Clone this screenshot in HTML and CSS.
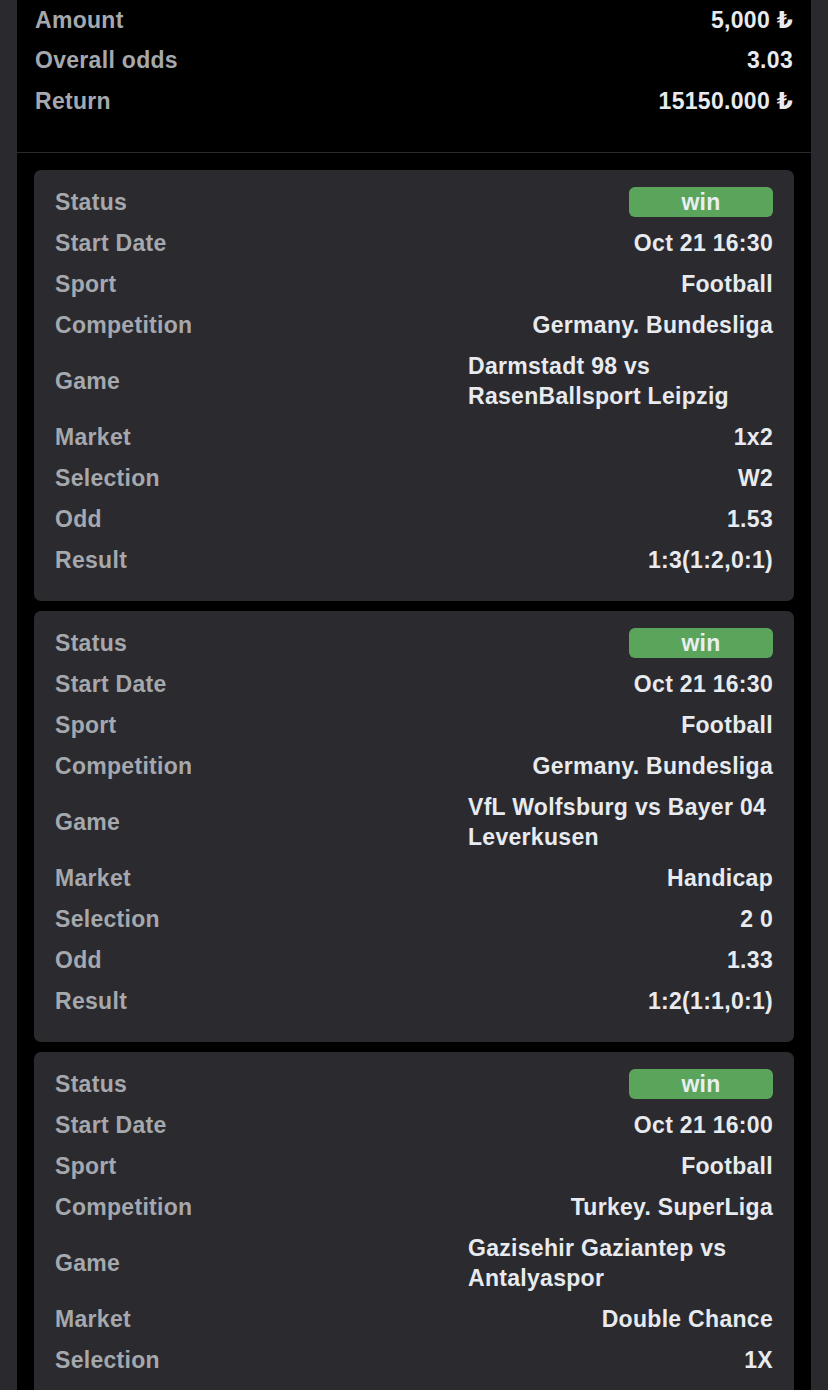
FILE: index.html
```html
<!DOCTYPE html>
<html lang="en">
<head>
<meta charset="utf-8">
<title>Bet details</title>
<link rel="stylesheet" href="styles.css">
</head>
<body>
<div class="panel">
  <section class="summary">
    <div class="row"><span class="label">Amount</span><span class="value">5,000 ₺</span></div>
    <div class="row"><span class="label">Overall odds</span><span class="value">3.03</span></div>
    <div class="row"><span class="label">Return</span><span class="value">15150.000 ₺</span></div>
  </section>
  <div class="divider"></div>
  <section class="bets">
    <div class="card">
      <div class="row"><span class="label">Status</span><span class="badge">win</span></div>
      <div class="row"><span class="label">Start Date</span><span class="value">Oct 21 16:30</span></div>
      <div class="row"><span class="label">Sport</span><span class="value">Football</span></div>
      <div class="row"><span class="label">Competition</span><span class="value">Germany. Bundesliga</span></div>
      <div class="row row-multi"><span class="label">Game</span><span class="value">Darmstadt 98 vs RasenBallsport Leipzig</span></div>
      <div class="row"><span class="label">Market</span><span class="value">1x2</span></div>
      <div class="row"><span class="label">Selection</span><span class="value">W2</span></div>
      <div class="row"><span class="label">Odd</span><span class="value">1.53</span></div>
      <div class="row"><span class="label">Result</span><span class="value">1:3(1:2,0:1)</span></div>
    </div>
    <div class="card">
      <div class="row"><span class="label">Status</span><span class="badge">win</span></div>
      <div class="row"><span class="label">Start Date</span><span class="value">Oct 21 16:30</span></div>
      <div class="row"><span class="label">Sport</span><span class="value">Football</span></div>
      <div class="row"><span class="label">Competition</span><span class="value">Germany. Bundesliga</span></div>
      <div class="row row-multi"><span class="label">Game</span><span class="value">VfL Wolfsburg vs Bayer 04 Leverkusen</span></div>
      <div class="row"><span class="label">Market</span><span class="value">Handicap</span></div>
      <div class="row"><span class="label">Selection</span><span class="value">2 0</span></div>
      <div class="row"><span class="label">Odd</span><span class="value">1.33</span></div>
      <div class="row"><span class="label">Result</span><span class="value">1:2(1:1,0:1)</span></div>
    </div>
    <div class="card">
      <div class="row"><span class="label">Status</span><span class="badge">win</span></div>
      <div class="row"><span class="label">Start Date</span><span class="value">Oct 21 16:00</span></div>
      <div class="row"><span class="label">Sport</span><span class="value">Football</span></div>
      <div class="row"><span class="label">Competition</span><span class="value">Turkey. SuperLiga</span></div>
      <div class="row row-multi"><span class="label">Game</span><span class="value">Gazisehir Gaziantep vs Antalyaspor</span></div>
      <div class="row"><span class="label">Market</span><span class="value">Double Chance</span></div>
      <div class="row"><span class="label">Selection</span><span class="value">1X</span></div>
    </div>
  </section>
</div>
</body>
</html>
```
FILE: styles.css
```css
html, body {
  margin: 0;
  padding: 0;
}

body {
  background: #2a292e;
  font-family: "Liberation Sans", Arial, "DejaVu Sans", sans-serif;
  font-weight: 700;
  font-size: 23px;
  letter-spacing: 0.3px;
  -webkit-font-smoothing: antialiased;
}

.panel {
  margin: 0 17px;
  background: #000;
  min-height: 1390px;
}

.summary {
  padding: 0 18px 30px 18px;
}

.summary .row {
  padding: 4.75px 0;
}

.divider {
  height: 1px;
  background: #2a292e;
}

.bets {
  display: flex;
  flex-direction: column;
  gap: 10px;
  padding: 17px 17px 20px 17px;
}

.card {
  background: #2b2a2f;
  border-radius: 7px;
  padding: 12px 21px 20px 21px;
}

.row {
  display: flex;
  justify-content: space-between;
  align-items: center;
  padding: 5px 0;
  line-height: 31px;
}

.row-multi {
  line-height: 30.5px;
}

.label {
  color: #a5a8ad;
  white-space: nowrap;
}

.value {
  color: #e7ebf0;
  margin-left: auto;
  max-width: 305px;
  text-align: left;
}

.badge {
  display: flex;
  align-items: center;
  justify-content: center;
  width: 144px;
  height: 30px;
  border-radius: 6px;
  background: #5aa55b;
  color: #e9eef2;
  line-height: 30px;
}
```
